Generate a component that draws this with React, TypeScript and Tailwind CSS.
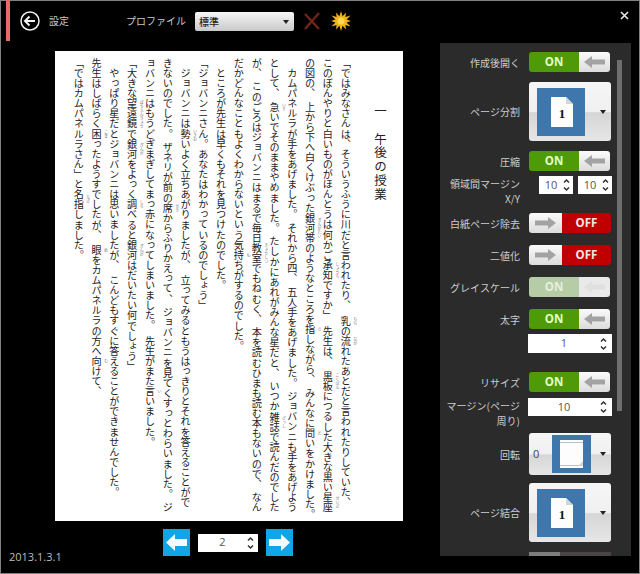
import React from "react";

const lines: string[] = [
  "「ではみなさんは、そういうふうに川だと言われたり、\u3000{乳|ちち}の{流|なが}れたあとだと言われたりしていた、",
  "このぼんやりと白いものがほんとうは何かご{承知|しょうち}ですか」\u2002先生は、\u2002{黒板|こくばん}につるした大きな黒い{星座|せいざ}",
  "の図の、\u2004上から下へ白くけぶった{銀河帯|ぎんがたい}のようなところを{指|さ}しながら、\u2004みんなに{問|と}いをかけました。",
  "　カムパネルラが手をあげました。\u2004それから四、\u2004五人手をあげました。\u2004ジョバンニも手をあげよう",
  "として、\u2004{急|いそ}いでそのままやめました。\u2004たしかにあれがみんな星だと、\u2004いつか{雑誌|ざっし}で読んだのでした",
  "が、\u2004このごろはジョバンニはまるで毎日{教室|きょうしつ}でもねむく、\u2004本を読むひまも読む本もないので、\u2004なん",
  "だかどんなこともよくわからないという気{持|も}ちがするのでした。",
  "　ところが先生は早くもそれを見つけたのでした。",
  "「ジョバンニさん。あなたはわかっているのでしょう」",
  "　ジョバンニは{勢|いきお}いよく立ちあがりましたが、\u3000立ってみるともうはっきりとそれを答えることがで",
  "きないのでした。\u2004ザネリが前の{席|せき}からふりかえって、\u2004ジョバンニを見てくすっとわらいました。\u2004ジ",
  "ョバンニはもうどぎまぎしてまっ赤になってしまいました。\u2002先生がまた{言|い}いました。",
  "「大きな{望遠鏡|ぼうえんきょう}で{銀河|ぎんが}をよっく{調|しら}べると{銀河|ぎんが}はだいたい何でしょう」",
  "　やっぱり星だとジョバンニは思いましたが、\u3000こんどもすぐに答えることができませんでした。",
  "先生はしばらく{困|こま}ったようすでしたが、\u3000{眼|め}をカムパネルラの方へ{向|む}けて、",
  "「ではカムパネルラさん」と{名指|なざ}しました。",
];

function Line({ text }: { text: string }) {
  const parts = text.split(/(\{[^}]+\})/);
  return (
    <div className="w-[17.8px] whitespace-pre">
      {parts.map((p, i) => {
        if (p.startsWith("{")) {
          const [b, r] = p.slice(1, -1).split("|");
          return (
            <span key={i} className="relative">
              {b}
              <span className="absolute -right-[4px] top-0 bottom-0 w-[4px] text-center text-[4px] leading-[4px] text-[#777]">
                {r}
              </span>
            </span>
          );
        }
        return <span key={i}>{p}</span>;
      })}
    </div>
  );
}

function Arrow({ dir, color }: { dir: "left" | "right"; color: string }) {
  return (
    <svg width="21" height="12" viewBox="0 0 21 12" className={dir === "right" ? "rotate-180" : ""}>
      <path d="M0 6 L8 0 V3.5 H21 V8.5 H8 V12 Z" fill={color} />
    </svg>
  );
}

function Toggle({ on, dim }: { on: boolean; dim?: boolean }) {
  const white = dim ? "bg-[#e9e9e9]" : "bg-gradient-to-b from-[#fbfbfb] to-[#dcdcdc]";
  const arrow = dim ? "#e0e0e0" : "#a3a3a3";
  if (on) {
    return (
      <div className="flex h-5 w-[81px] overflow-hidden rounded-[3px]">
        <div
          className={`flex w-[50px] items-center justify-center font-['Open_Sans',sans-serif] text-[11.5px] font-bold ${
            dim ? "bg-[#b6cca6] text-[#e6efdd]" : "bg-[#4f9a08] text-[#e4ffc4]"
          }`}
        >
          ON
        </div>
        <div className={`flex flex-1 items-center justify-center ${white}`}>
          <Arrow dir="left" color={arrow} />
        </div>
      </div>
    );
  }
  return (
    <div className="flex h-5 w-[82px] overflow-hidden rounded-[3px]">
      <div className={`flex w-[33px] items-center justify-center ${white}`}>
        <Arrow dir="right" color={arrow} />
      </div>
      <div className="flex flex-1 items-center justify-center bg-[#c00000] font-['Open_Sans',sans-serif] text-[11.5px] font-bold text-[#fbe3e3]">
        OFF
      </div>
    </div>
  );
}

function Chevrons() {
  return (
    <svg width="7" height="14" viewBox="0 0 7 14" className="shrink-0">
      <path d="M1 4.5 L3.5 2 L6 4.5" fill="none" stroke="#333" strokeWidth="1.5" />
      <path d="M1 9.5 L3.5 12 L6 9.5" fill="none" stroke="#333" strokeWidth="1.5" />
    </svg>
  );
}

function Spinner({ value, className }: { value: string; className: string }) {
  return (
    <div className={`flex items-center bg-white ${className}`}>
      <span className="flex-1 text-center font-['Open_Sans',sans-serif] text-[11px] text-[#555]">{value}</span>
      <Chevrons />
    </div>
  );
}

function Caret() {
  return (
    <svg width="6" height="4" viewBox="0 0 6 4" className="shrink-0">
      <path d="M0 0 H6 L3 4 Z" fill="#222" />
    </svg>
  );
}

function DocThumb() {
  return (
    <svg width="48" height="48" viewBox="0 0 48 48" className="shrink-0">
      <rect width="48" height="48" fill="#3f76ab" />
      <path d="M14 9 H29 L36 16 V39 H14 Z" fill="#fdfdfd" />
      <path d="M29 9 L36 16 H29 Z" fill="#cfd6dc" />
      <text x="25" y="29.5" textAnchor="middle" fontFamily="'Liberation Serif', serif" fontWeight="700" fontSize="13" fill="#111">
        1
      </text>
    </svg>
  );
}

function RotateThumb() {
  return (
    <svg width="39" height="38" viewBox="0 0 39 38" className="shrink-0">
      <rect width="39" height="38" fill="#3f76ab" />
      <rect x="8" y="5" width="23" height="28" fill="#fdfdfd" />
      <path d="M8 7.5 H31 M8 30.5 H31" stroke="#9db4c8" strokeWidth="0.8" />
      <path d="M31 26 L26 31 H31 Z" fill="#cfd6dc" />
    </svg>
  );
}

function Combo({ children, className = "h-[59px]" }: { children: React.ReactNode; className?: string }) {
  return (
    <div
      className={`flex w-[82px] items-center rounded-[3px] bg-[linear-gradient(#f6f6f6_0%,#f0f0f0_50%,#d6d6d6_52%,#e6e6e6_100%)] pr-[5px] ${className}`}
    >
      {children}
      <div className="flex flex-1 justify-end">
        <Caret />
      </div>
    </div>
  );
}

function Row({ label, children, className = "", top }: { label: React.ReactNode; children: React.ReactNode; className?: string; top?: boolean }) {
  return (
    <div className={`flex shrink-0 ${top ? "items-start" : "items-center"} ${className}`}>
      <div className="w-20 shrink-0 whitespace-nowrap text-right text-[10px] leading-[15px] text-[#cdcdcd]">{label}</div>
      <div className="ml-[9px]">{children}</div>
    </div>
  );
}

function NavButton({ dir }: { dir: "left" | "right" }) {
  return (
    <div className="flex h-[27px] w-[27px] items-center justify-center bg-[#12a5e6]">
      <svg width="21" height="17" viewBox="0 0 21 17" className={dir === "right" ? "rotate-180" : ""}>
        <path d="M0 8.5 L9 0 V5 H21 V12 H9 V17 Z" fill="#f2fbff" />
      </svg>
    </div>
  );
}

export default function App() {
  return (
    <div className="flex h-[574px] w-[640px] flex-col overflow-hidden bg-black font-['Noto_Sans_CJK_JP',sans-serif] shadow-[inset_0_0_0_1px_#808080] [font-kerning:none]">
      <header className="flex h-[43px] shrink-0 items-start">
        <div className="ml-[6px] h-[41px] w-[4px] shrink-0 bg-[#e76a6a]" />
        <svg width="20" height="20" viewBox="0 0 20 20" className="ml-[10px] mt-[11px] shrink-0">
          <circle cx="10" cy="10" r="9" fill="none" stroke="#f2f2f2" strokeWidth="1.5" />
          <path d="M15 10 H5.5 M9.5 5.5 L5 10 L9.5 14.5" fill="none" stroke="#f2f2f2" strokeWidth="2" />
        </svg>
        <span className="ml-[9px] mt-[13px] text-[10px] leading-4 text-[#c8c8c8]">設定</span>
        <span className="ml-[57px] mt-[13px] text-[10px] leading-4 text-[#c8c8c8]">プロファイル</span>
        <div className="ml-[9px] mt-[12px] flex h-[19px] w-[99px] items-center rounded-[2px] bg-gradient-to-b from-[#f8f8f8] to-[#c9c9c9] pl-1 pr-[5px]">
          <span className="flex-1 text-[10px] font-medium leading-none text-[#222]">標準</span>
          <Caret />
        </div>
        <svg width="18" height="18" viewBox="0 0 18 18" className="ml-[9px] mt-[12px] shrink-0">
          <path d="M2 2 L16 17 M16 1 L2 17" fill="none" stroke="#6f241c" strokeWidth="2.4" />
        </svg>
        <svg width="20" height="20" viewBox="0 0 20 20" className="ml-[10px] mt-[11px] shrink-0">
          <path
            d="M10 0 L11.6 5.2 L15 1.5 L14.4 6 L19.5 4.5 L15.6 8.4 L20 10 L15.6 11.6 L19.5 15.5 L14.4 14 L15 18.5 L11.6 14.8 L10 20 L8.4 14.8 L5 18.5 L5.6 14 L0.5 15.5 L4.4 11.6 L0 10 L4.4 8.4 L0.5 4.5 L5.6 6 L5 1.5 L8.4 5.2 Z"
            fill="#f0b21e"
          />
          <circle cx="10" cy="10" r="3.5" fill="#fbd850" />
        </svg>
        <svg width="9" height="9" viewBox="0 0 9 9" className="ml-auto mr-[11px] mt-[10.5px] shrink-0">
          <path d="M1 1 L8 8 M8 1 L1 8" stroke="#e8e8e8" strokeWidth="1.6" />
        </svg>
      </header>

      <div className="flex min-h-0 flex-1 items-start">
        <div className="flex w-[440px] shrink-0 flex-col">
          <div className="ml-[55px] mt-2 h-[470px] w-[348px] overflow-hidden bg-white pr-[14px] text-[10.1px] leading-[17.8px] text-[#222] [writing-mode:vertical-rl]">
            <div className="ml-[17px] w-[17.8px] whitespace-nowrap pt-[54px] text-[12.5px] tracking-[1.25px]">
              一　午後の授業
            </div>
            <div className="pt-[7px]">
              {lines.map((t, i) => (
                <Line key={i} text={t} />
              ))}
            </div>
          </div>

          <div className="mt-2 flex h-[35px] items-start">
            <span className="w-[163px] self-end pl-[9px] font-['Open_Sans',sans-serif] text-[11px] leading-[14px] text-[#bdbdbd]">
              2013.1.3.1
            </span>
            <div className="flex items-center gap-2">
              <NavButton dir="left" />
              <Spinner value="2" className="h-[18px] w-[60px] pr-[4px]" />
              <NavButton dir="right" />
            </div>
          </div>
        </div>

        <aside className="relative flex h-[513px] w-[191px] shrink-0 flex-col overflow-hidden bg-[#2b2b2b] pt-[9px]">
          <div className="absolute left-[177px] top-[17px] h-[351px] w-[5px] bg-[#6e6e6e]" />
          <Row label="作成後開く"><Toggle on /></Row>
          <Row label="ページ分割" className="mt-[10px]">
            <Combo><div className="ml-2"><DocThumb /></div></Combo>
          </Row>
          <Row label="圧縮" className="mt-[10px]"><Toggle on /></Row>
          <Row top label={<>領域間マージン<br />X/Y</>} className="mt-[5px] h-[30px]">
            <div className="ml-[10px] flex gap-[5px]">
              <Spinner value="10" className="h-[18px] w-[34px] pr-[3px]" />
              <Spinner value="10" className="h-[18px] w-[34px] pr-[3px]" />
            </div>
          </Row>
          <Row label="白紙ページ除去" className="mt-[7px]"><Toggle on={false} /></Row>
          <Row label="二値化" className="mt-3"><Toggle on={false} /></Row>
          <Row label="グレイスケール" className="mt-3"><Toggle on dim /></Row>
          <Row label="太字" className="mt-3"><Toggle on /></Row>
          <Row label="" className="mt-[5px]">
            <Spinner value="1" className="-ml-px h-[19px] w-[84px] pr-[5px]" />
          </Row>
          <Row label="リサイズ" className="mt-[19px]"><Toggle on /></Row>
          <Row top label={<>マージン(ページ<br />周り)</>} className="mt-[6px] h-[30px]">
            <Spinner value="10" className="-ml-px h-[18px] w-[84px] pr-[5px]" />
          </Row>
          <Row label="回転" className="mt-[5px]">
            <Combo className="h-[42px]">
              <span className="ml-1 w-[19px] font-['Open_Sans',sans-serif] text-[11px] text-[#444]">0</span>
              <RotateThumb />
            </Combo>
          </Row>
          <Row label="ページ結合" className="mt-2">
            <Combo><div className="ml-2"><DocThumb /></div></Combo>
          </Row>
          <Row label="" className="mt-[10px]">
            <div className="h-5 w-[82px] bg-[linear-gradient(90deg,#7d7d7d_0%,#7d7d7d_38%,#4a4444_38%,#4a4444_100%)]" />
          </Row>
        </aside>
      </div>
    </div>
  );
}
